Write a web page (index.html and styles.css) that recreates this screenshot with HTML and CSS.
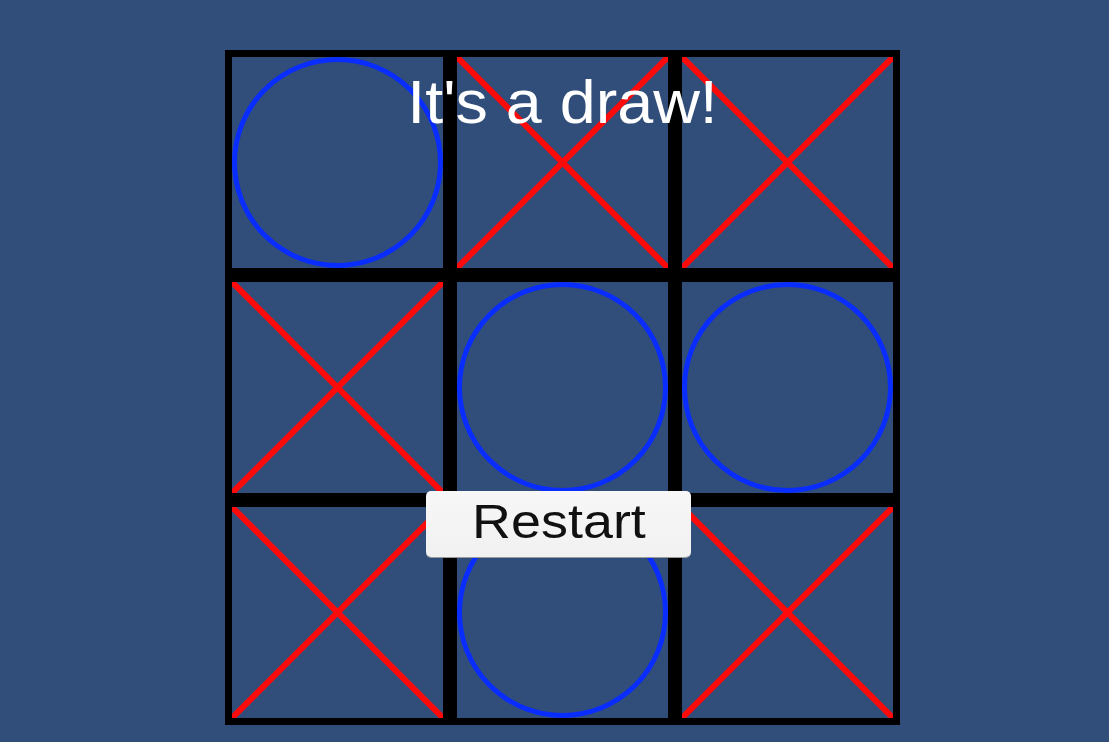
FILE: index.html
```html
<!DOCTYPE html>
<html lang="en">
	<head>
		<meta charset="UTF-8" />
		<meta name="viewport" content="width=device-width, initial-scale=1.0" />
		<title>Tic Tac Toe</title>
		<link rel="stylesheet" href="styles.css">
	</head>
	<body>
		<div class="board">
			<div class="grid" id="grid">
				<!-- Cells will be injected here -->
			</div>
			<h1 class="status"><span>It's a draw!</span></h1>
			<button class="restart"><span>Restart</span></button>
		</div>

		<script>
			const cells = ["O", "X", "X", "X", "O", "O", "X", "O", "X"];

			const circle = `
				<svg viewBox="0 0 211 211">
					<circle cx="105.5" cy="105.5" r="103" />
				</svg>`;
			const cross = `
				<svg viewBox="0 0 211 211">
					<line x1="0" y1="0" x2="211" y2="211" />
					<line x1="211" y1="0" x2="0" y2="211" />
				</svg>`;

			function renderBoard() {
				const grid = document.getElementById("grid");
				grid.innerHTML = "";
				cells.forEach((mark) => {
					const cell = document.createElement("div");
					cell.className = mark === "O" ? "cell circle" : "cell cross";
					cell.innerHTML = mark === "O" ? circle : cross;
					grid.appendChild(cell);
				});
			}

			renderBoard();
		</script>
	</body>
</html>
```

FILE: styles.css
```css
body {
	margin: 0;
	padding: 50px 0 0 225px;
	background-color: #314d79;
	font-family: "Liberation Sans", Arial, sans-serif;
	height: 742px;
	box-sizing: border-box;
	overflow: hidden;
}
.board {
	position: relative;
	width: 675px;
	height: 675px;
}
.grid {
	display: grid;
	grid-template-columns: repeat(3, 225px);
	grid-template-rows: repeat(3, 225px);
}
.cell {
	box-sizing: border-box;
	border: 7px solid #000;
}
.cell svg {
	display: block;
	width: 211px;
	height: 211px;
	overflow: hidden;
}
.circle circle {
	fill: none;
	stroke: #0a2dff;
	stroke-width: 5;
}
.cross line {
	stroke: #ff0a0a;
	stroke-width: 6;
}
.status {
	position: absolute;
	top: 22px;
	left: 0;
	width: 675px;
	margin: 0;
	text-align: center;
	color: #fff;
	font-size: 61px;
	font-weight: normal;
	line-height: 1;
}
.status span,
.restart span {
	display: inline-block;
}
.status span {
	transform: scaleX(1.06);
}
.restart {
	position: absolute;
	left: 201px;
	top: 441px;
	width: 265px;
	height: 66px;
	padding: 0 0 5px;
	border: none;
	border-radius: 5px;
	background: linear-gradient(#f7f7f7, #f1f1f1);
	box-shadow: 0 1px 0 #9a9a9a;
	color: #111;
	font-family: "Liberation Sans", Arial, sans-serif;
	font-size: 49px;
	line-height: 1;
}
.restart span {
	transform: scaleX(1.1);
}
```
